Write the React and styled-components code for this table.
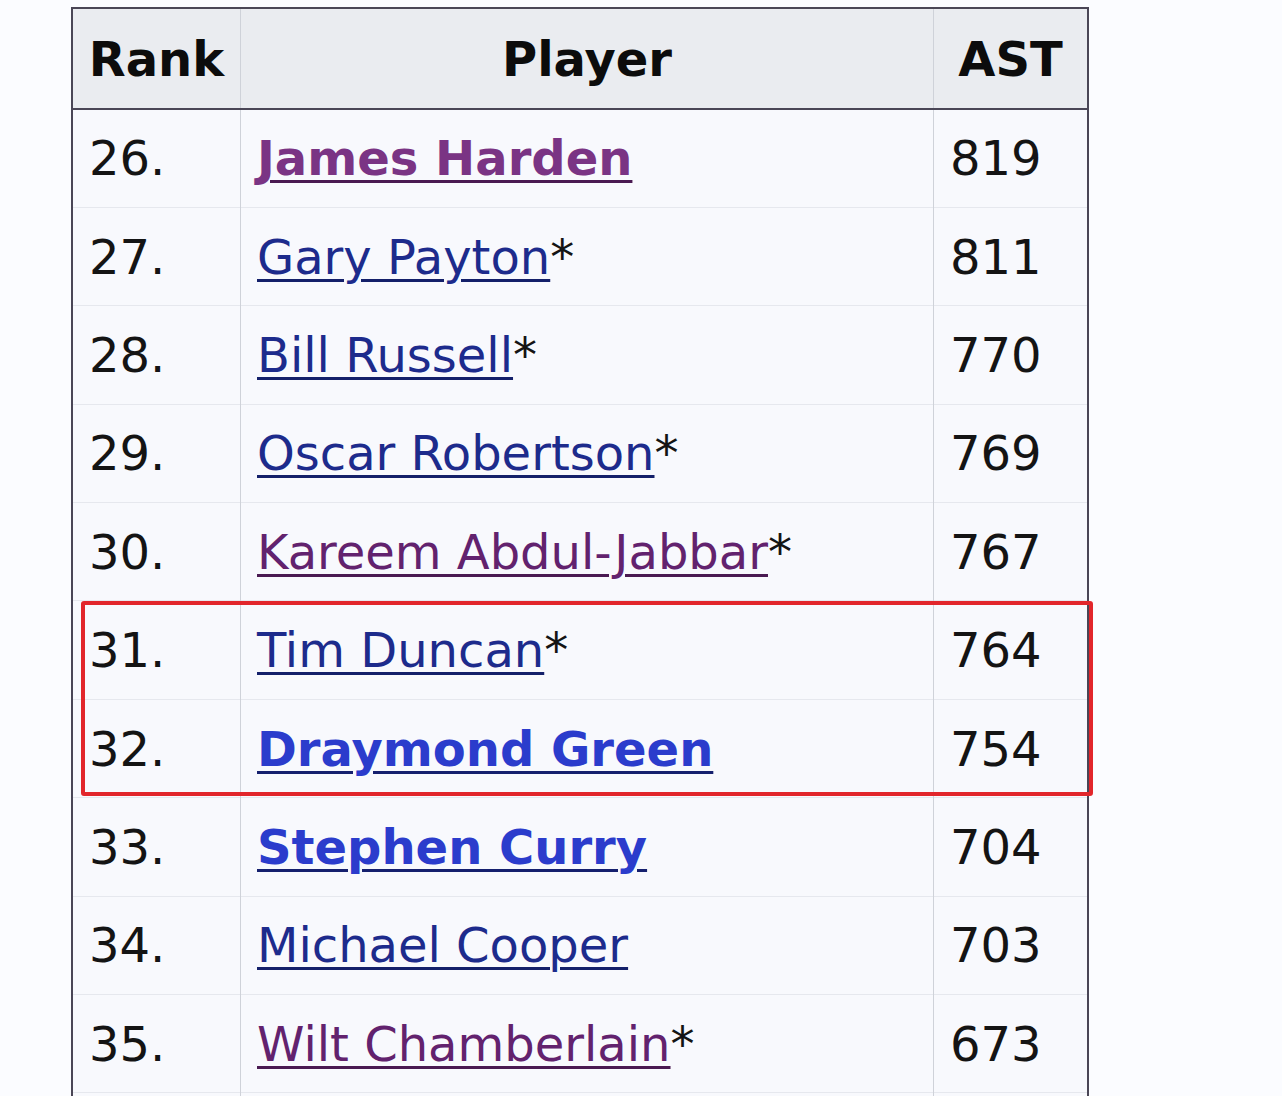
import styled, { createGlobalStyle } from "styled-components"

const GlobalStyle = createGlobalStyle`
  html, body {
    margin: 0;
    padding: 0;
    background: #fbfcff;
  }
`

const Page = styled.div`
  padding: 7px 0 0 71px;
  height: 1096px;
  overflow: hidden;
  box-sizing: border-box;
  font-family: "DejaVu Sans", Verdana, sans-serif;
`

const TableWrap = styled.div`
  position: relative;
  width: 1012px;
`

const Table = styled.table`
  border-collapse: collapse;
  table-layout: fixed;
  width: 1012px;
  background: #f8f9fd;
  border-left: 2px solid #4a4656;
  border-right: 2px solid #4a4656;
  font-size: 48px;
  color: #141414;
`

const HeadCell = styled.th`
  width: ${p => p.$w}px;
  height: 99px;
  padding: 0;
  background: #eaecf0;
  font-weight: bold;
  text-align: center;
  vertical-align: middle;
  border-top: 2px solid #4a4656;
  border-bottom: 2px solid #4a4656;
  border-left: 1px solid #cfd2d9;
  border-right: 1px solid #cfd2d9;
  color: #0c0c0c;
`

const Row = styled.tr`
  height: 98.4px;
  & + & td {
    border-top: 1px solid #e6e8ee;
  }
`

const Cell = styled.td`
  padding: 0 16px;
  vertical-align: middle;
  border-left: 1px solid #cfd2d9;
  border-right: 1px solid #cfd2d9;
  white-space: nowrap;
`

const PlayerLink = styled.a`
  font-weight: ${p => (p.$bold ? "bold" : "normal")};
  color: ${p => p.$color};
  text-decoration: underline;
  text-decoration-thickness: 3px;
  text-underline-offset: 5px;
  text-decoration-color: ${p => p.$line};
`

const HighlightBox = styled.div`
  position: absolute;
  left: 10px;
  top: 594px;
  width: 1012px;
  height: 195px;
  box-sizing: border-box;
  border: 4px solid #e2262b;
  border-radius: 3px;
  pointer-events: none;
`

const tones = {
  visited: { color: "#62226e", line: "#4a1a52" },
  visitedBold: { color: "#7a3484", line: "#4a1a52" },
  link: { color: "#1d2b8c", line: "#14206a" },
  linkBold: { color: "#2b3ccc", line: "#15206e" },
}

const players = [
  { rank: 26, name: "James Harden", star: false, tone: "visitedBold", bold: true, ast: 819 },
  { rank: 27, name: "Gary Payton", star: true, tone: "link", ast: 811 },
  { rank: 28, name: "Bill Russell", star: true, tone: "link", ast: 770 },
  { rank: 29, name: "Oscar Robertson", star: true, tone: "link", ast: 769 },
  { rank: 30, name: "Kareem Abdul-Jabbar", star: true, tone: "visited", ast: 767 },
  { rank: 31, name: "Tim Duncan", star: true, tone: "link", ast: 764 },
  { rank: 32, name: "Draymond Green", star: false, tone: "linkBold", bold: true, ast: 754 },
  { rank: 33, name: "Stephen Curry", star: false, tone: "linkBold", bold: true, ast: 704 },
  { rank: 34, name: "Michael Cooper", star: false, tone: "link", ast: 703 },
  { rank: 35, name: "Wilt Chamberlain", star: true, tone: "visited", ast: 673 },
  { rank: 36, name: "", star: false, tone: "link", ast: "" },
]

const App = () => {
  return (
    <>
      <GlobalStyle />
      <Page>
        <TableWrap>
          <Table>
            <thead>
              <tr>
                <HeadCell $w={167}>Rank</HeadCell>
                <HeadCell $w={692}>Player</HeadCell>
                <HeadCell $w={153}>AST</HeadCell>
              </tr>
            </thead>
            <tbody>
              {players.map(p => (
                <Row key={p.rank}>
                  <Cell>{p.name ? `${p.rank}.` : ""}</Cell>
                  <Cell>
                    {p.name && (
                      <PlayerLink
                        href="#"
                        $bold={p.bold}
                        $color={tones[p.tone].color}
                        $line={tones[p.tone].line}
                      >
                        {p.name}
                      </PlayerLink>
                    )}
                    {p.star && "*"}
                  </Cell>
                  <Cell>{p.ast}</Cell>
                </Row>
              ))}
            </tbody>
          </Table>
          <HighlightBox />
        </TableWrap>
      </Page>
    </>
  )
}

export default App
